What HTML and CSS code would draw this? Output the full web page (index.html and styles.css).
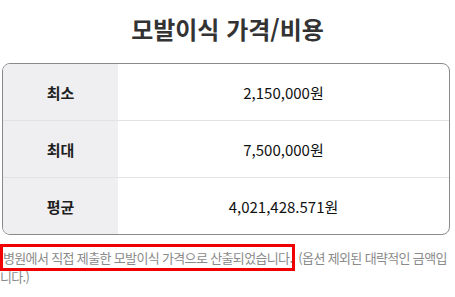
FILE: index.html
```html
<!DOCTYPE html>
<html lang="ko">
<head>
<meta charset="utf-8">
<title>모발이식 가격/비용</title>
<link rel="stylesheet" href="styles.css">
</head>
<body>
<div class="page">
  <h2 class="title">모발이식 가격/비용</h2>
  <div class="price-table">
    <div class="row">
      <div class="label">최소</div>
      <div class="value">2,150,000원</div>
    </div>
    <div class="row">
      <div class="label">최대</div>
      <div class="value">7,500,000원</div>
    </div>
    <div class="row">
      <div class="label">평균</div>
      <div class="value">4,021,428.571원</div>
    </div>
  </div>
  <p class="note"><span class="highlight">병원에서 직접 제출한 모발이식 가격으로 산출되었습니다.</span> (옵션 제외된 대략적인 금액입니다.)</p>
</div>
</body>
</html>
```

FILE: styles.css
```css
html, body {
  margin: 0;
  padding: 0;
  background: #ffffff;
}

body {
  font-family: "Noto Sans CJK KR", "Noto Sans", sans-serif;
  color: #222;
}

.page {
  width: 455px;
}

.title {
  margin: 12px 0 0;
  font-size: 24px;
  line-height: 34px;
  font-weight: 700;
  color: #333;
  text-align: center;
}

.price-table {
  margin: 17px 5px 0 2px;
  border: 1px solid #8a8a8a;
  border-radius: 8px;
  overflow: hidden;
  display: flex;
  flex-direction: column;
}

.row {
  display: flex;
  height: 56px;
  border-bottom: 1px solid #e2e2e4;
}

.row:last-child {
  border-bottom: none;
}

.label {
  flex: 0 0 115px;
  background: #efeff1;
  display: flex;
  align-items: center;
  justify-content: center;
  font-size: 15px;
  font-weight: 700;
  color: #1e1e1e;
}

.value {
  flex: 1;
  display: flex;
  align-items: center;
  justify-content: center;
  font-size: 15px;
  color: #111;
}

.note {
  margin: 13px 0 0;
  font-size: 13px;
  line-height: 19px;
  letter-spacing: -0.65px;
  color: #8a8a8a;
}

.highlight {
  border: 3px solid #f00000;
  padding: 1px 0;
}
```
